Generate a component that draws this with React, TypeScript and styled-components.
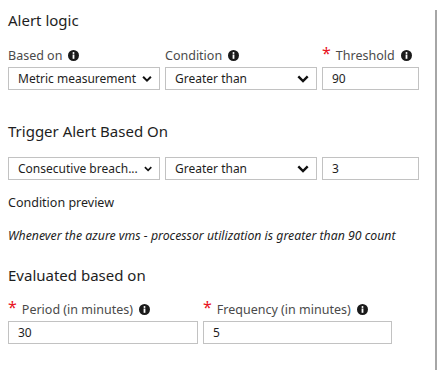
import { FC } from "react";
import styled, { createGlobalStyle } from "styled-components";

const Global = createGlobalStyle`
    body {
        margin: 0;
        background: #ffffff;
        font-family: "Noto Sans", "Open Sans", sans-serif;
        color: #252525;
    }
`;

const Panel = styled.div`
    width: 437px;
    height: 369px;
    box-sizing: border-box;
    border-right: 2px solid #a6a6a6;
    border-bottom: 2px solid #a6a6a6;
    padding: 0 0 0 8px;
`;

const Heading = styled.h2<{ $top: number }>`
    margin: ${(p) => p.$top}px 0 0;
    font-size: 15px;
    font-weight: 400;
    line-height: 20px;
    color: #1e1e1e;
`;

const Row = styled.div<{ $cols: string; $top: number }>`
    display: grid;
    grid-template-columns: ${(p) => p.$cols};
    column-gap: 5px;
    margin-top: ${(p) => p.$top}px;
`;

const Field = styled.div`
    display: flex;
    flex-direction: column;
    gap: 3px;
`;

const Label = styled.div`
    display: flex;
    align-items: center;
    height: 18px;
    font-size: 12.5px;
    color: #4a4a4a;
    white-space: nowrap;
`;

const Star = styled.span`
    color: #e81123;
    font-size: 16px;
    line-height: 10px;
    margin-right: 5px;
    align-self: flex-start;
    margin-top: 2px;
`;

const Box = styled.div`
    display: flex;
    align-items: center;
    gap: 6px;
    height: 23px;
    box-sizing: border-box;
    border: 1px solid #c2c2c2;
    padding: 0 7px 0 9px;
    font-size: 12px;
    color: #1e1e1e;
    white-space: nowrap;
    overflow: hidden;
`;

const SelectText = styled.span<{ $grow?: boolean }>`
    flex: ${(p) => (p.$grow ? "1" : "0 0 auto")};
`;

const Text = styled.p<{ $top: number; $italic?: boolean }>`
    margin: ${(p) => p.$top}px 0 0;
    font-size: ${(p) => (p.$italic ? "12.3px" : "12.5px")};
    line-height: 18px;
    font-style: ${(p) => (p.$italic ? "italic" : "normal")};
    color: #1e1e1e;
    white-space: nowrap;
`;

const Info: FC = () => (
    <svg width="11" height="11" viewBox="0 0 11 11" style={{ marginLeft: 6 }}>
        <circle cx="5.5" cy="5.5" r="5.5" fill="#1a1a1a" />
        <circle cx="5.5" cy="2.9" r="1" fill="#fff" />
        <rect x="4.6" y="4.5" width="1.8" height="4.3" fill="#fff" />
    </svg>
);

const Chevron: FC = () => (
    <svg width="12" height="8" viewBox="0 0 12 8">
        <path d="M1.3 1.3 L6 6 L10.7 1.3" fill="none" stroke="#111" strokeWidth="2.4" />
    </svg>
);

const Select: FC<{ value: string; grow?: boolean }> = ({ value, grow = true }) => (
    <Box>
        <SelectText $grow={grow}>{value}</SelectText>
        <Chevron />
    </Box>
);

const FieldLabel: FC<{ text: string; required?: boolean; info?: boolean }> = ({ text, required, info }) => (
    <Label>
        {required && <Star>*</Star>}
        {text}
        {info && <Info />}
    </Label>
);

const App: FC = () => (
    <>
        <Global />
        <Panel>
            <Heading $top={10}>Alert logic</Heading>
            <Row $cols="152px 152px 97px" $top={16}>
                <Field>
                    <FieldLabel text="Based on" info />
                    <Select value="Metric measurement" grow={false} />
                </Field>
                <Field>
                    <FieldLabel text="Condition" info />
                    <Select value="Greater than" />
                </Field>
                <Field>
                    <FieldLabel text="Threshold" required info />
                    <Box>90</Box>
                </Field>
            </Row>

            <Heading $top={31}>Trigger Alert Based On</Heading>
            <Row $cols="152px 152px 97px" $top={16}>
                <Select value="Consecutive breach..." grow={false} />
                <Select value="Greater than" />
                <Box>3</Box>
            </Row>

            <Text $top={14}>Condition preview</Text>
            <Text $top={15} $italic>
                Whenever the azure vms - processor utilization is greater than 90 count
            </Text>

            <Heading $top={20}>Evaluated based on</Heading>
            <Row $cols="190px 189px" $top={15}>
                <Field>
                    <FieldLabel text="Period (in minutes)" required info />
                    <Box>30</Box>
                </Field>
                <Field>
                    <FieldLabel text="Frequency (in minutes)" required info />
                    <Box>5</Box>
                </Field>
            </Row>
        </Panel>
    </>
);

export default App;
